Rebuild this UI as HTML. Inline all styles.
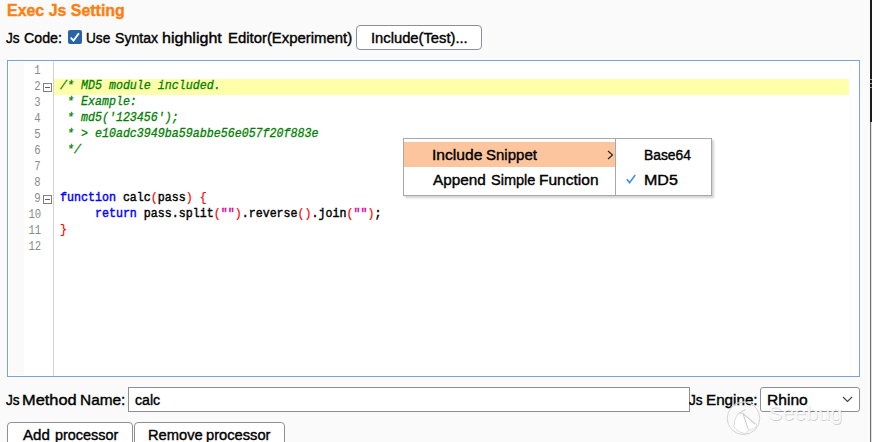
<!DOCTYPE html>
<html><head><meta charset="utf-8">
<style>
html,body{margin:0;padding:0;}
body{width:872px;height:442px;overflow:hidden;background:#fafafa;position:relative;font-family:"Liberation Sans",sans-serif;color:#000;}
.abs{position:absolute;}
.t{position:absolute;white-space:nowrap;line-height:normal;transform-origin:0 0;font-family:"Liberation Sans",sans-serif;-webkit-text-stroke-width:0.4px;}
.cb{left:68px;top:30px;width:14px;height:14px;background:#2b64a6;border-radius:2px;}
.btn{position:absolute;border:1px solid #8e8e96;border-radius:4px;background:#fff;box-sizing:border-box;}
.editor{left:7px;top:60px;width:853px;height:317px;box-sizing:border-box;border:1px solid #7ca3d9;background:#fff;}
.gut1{position:absolute;left:1px;top:1px;width:15px;height:313px;background:#fafafa;}
.gline{position:absolute;left:45px;top:0;width:1px;height:315px;background:#d4d4d4;}
.hl{position:absolute;left:46px;top:18px;width:795px;height:16px;background:#ffffaa;}
.code{position:absolute;left:0;top:0;font-family:"Liberation Mono",monospace;}
.ln{position:absolute;right:0px;top:0.6px;color:#8a8a8a;font-size:12.6px;line-height:16px;transform-origin:100% 0;transform:scaleX(0.84);}
.lnw{position:absolute;left:0;width:33px;height:16px;}
.cl{position:absolute;left:52px;font-weight:normal;-webkit-text-stroke-width:0.45px;line-height:16px;font-size:13.4px;transform-origin:0 0;transform:scaleX(0.8694);white-space:pre;}
.cm{color:#008000;font-style:italic;-webkit-text-stroke-width:0.3px;}
.kw{color:#0000ff;}
.pr{color:#ff0000;-webkit-text-stroke-width:0.2px;}
.st{color:#dc009c;}
.fold{position:absolute;left:35px;width:7px;height:7px;border:1px solid #808080;background:#fff;}
.fold:after{content:"";position:absolute;left:1px;top:3px;width:5px;height:1px;background:#606060;}
.input{position:absolute;border:1px solid #8e8e96;background:#fff;box-sizing:border-box;}
</style></head>
<body>
<div class="abs cb"><svg width="14" height="14" viewBox="0 0 14 14" style="display:block"><path d="M2.7 7.6 L5.5 10.6 L10.9 3.3" stroke="#fff" stroke-width="1.8" fill="none"/></svg></div>
<div class="btn" style="left:356px;top:25px;width:126px;height:25px;"></div>

<div class="abs editor">
  <div class="gut1"></div>
  <div class="gline"></div>
  <div class="hl"></div>
  <div class="code">
    <div class="lnw" style="top:1px"><div class="ln">1</div></div>
    <div class="lnw" style="top:17px"><div class="ln">2</div></div>
    <div class="lnw" style="top:33px"><div class="ln">3</div></div>
    <div class="lnw" style="top:49px"><div class="ln">4</div></div>
    <div class="lnw" style="top:65px"><div class="ln">5</div></div>
    <div class="lnw" style="top:81px"><div class="ln">6</div></div>
    <div class="lnw" style="top:97px"><div class="ln">7</div></div>
    <div class="lnw" style="top:113px"><div class="ln">8</div></div>
    <div class="lnw" style="top:129px"><div class="ln">9</div></div>
    <div class="lnw" style="top:145px"><div class="ln">10</div></div>
    <div class="lnw" style="top:161px"><div class="ln">11</div></div>
    <div class="lnw" style="top:177px"><div class="ln">12</div></div>
    <div class="fold" style="top:22px"></div>
    <div class="fold" style="top:134px"></div>
    <div class="cl cm" style="top:17px">/* MD5 module included.</div>
    <div class="cl cm" style="top:33px"> * Example:</div>
    <div class="cl cm" style="top:49px"> * md5('123456');</div>
    <div class="cl cm" style="top:65px"> * &gt; e10adc3949ba59abbe56e057f20f883e</div>
    <div class="cl cm" style="top:81px"> */</div>
    <div class="cl" style="top:129px"><span class="kw">function</span> calc<span class="pr">(</span>pass<span class="pr">)</span> <span class="pr">{</span></div>
    <div class="cl" style="top:145px">     <span class="kw">return</span> pass.split<span class="pr">(</span><span class="st">""</span><span class="pr">)</span>.reverse<span class="pr">()</span>.join<span class="pr">(</span><span class="st">""</span><span class="pr">)</span>;</div>
    <div class="cl" style="top:161px"><span class="pr">}</span></div>
  </div>
</div>

<div class="abs" style="left:403px;top:138px;width:309px;height:58px;box-sizing:border-box;background:#fff;border:1px solid #a8a8a8;box-shadow:2px 2px 2px rgba(0,0,0,0.18);"></div>
<div class="abs" style="left:404px;top:142px;width:211px;height:25px;background:#fdc59d;"></div>
<div class="abs" style="left:615px;top:139px;width:1px;height:56px;background:#a8a8a8;"></div>
<svg class="abs" style="left:605px;top:149px" width="10" height="12" viewBox="0 0 10 12"><path d="M3 2 L7.5 6 L3 10" stroke="#202020" stroke-width="1.1" fill="none"/></svg>
<svg class="abs" style="left:625px;top:173px" width="12" height="12" viewBox="0 0 12 12"><path d="M1.8 6.2 L4.6 9.6 L10.2 2" stroke="#3d8ee8" stroke-width="1.6" fill="none"/></svg>

<div class="input" style="left:128px;top:387px;width:562px;height:25px;"></div>
<div class="input" style="left:760px;top:387px;width:100px;height:25px;border-radius:3px;"></div>
<svg class="abs" style="left:841px;top:394px" width="14" height="10" viewBox="0 0 14 10"><path d="M2 3 L6.5 7.5 L11 3" stroke="#404040" stroke-width="1.1" fill="none"/></svg>
<div class="btn" style="left:7px;top:422px;width:126px;height:30px;"></div>
<div class="btn" style="left:134px;top:422px;width:151px;height:30px;"></div>

<div class="t" style="left:7.00px;top:1.52px;font-size:16px;font-weight:bold;color:#fb8012;transform:scaleX(0.9957)">Exec Js Setting</div>
<div class="t" style="left:6.07px;top:28.97px;font-size:15.5px;font-weight:normal;color:#000;transform:scaleX(0.8800)">Js</div>
<div class="t" style="left:24.10px;top:28.97px;font-size:15.5px;font-weight:normal;color:#000;transform:scaleX(0.9162)">Code:</div>
<div class="t" style="left:86.00px;top:28.97px;font-size:15.5px;font-weight:normal;color:#000;transform:scaleX(0.8800)">Use</div>
<div class="t" style="left:114.50px;top:28.97px;font-size:15.5px;font-weight:normal;color:#000;transform:scaleX(0.9090)">Syntax</div>
<div class="t" style="left:161.66px;top:28.97px;font-size:15.5px;font-weight:normal;color:#000;transform:scaleX(1.0360)">highlight</div>
<div class="t" style="left:228.44px;top:28.97px;font-size:15.5px;font-weight:normal;color:#000;transform:scaleX(0.9606)">Editor(Experiment)</div>
<div class="t" style="left:371.15px;top:28.97px;font-size:15.5px;font-weight:normal;color:#000;transform:scaleX(0.9512)">Include(Test)...</div>
<div class="t" style="left:431.59px;top:145.97px;font-size:15.5px;font-weight:normal;color:#000;transform:scaleX(1.0091)">Include</div>
<div class="t" style="left:486.20px;top:145.97px;font-size:15.5px;font-weight:normal;color:#000;transform:scaleX(0.9688)">Snippet</div>
<div class="t" style="left:432.80px;top:170.97px;font-size:15.5px;font-weight:normal;color:#000;transform:scaleX(0.9864)">Append</div>
<div class="t" style="left:490.60px;top:170.97px;font-size:15.5px;font-weight:normal;color:#000;transform:scaleX(0.9367)">Simple</div>
<div class="t" style="left:539.20px;top:170.97px;font-size:15.5px;font-weight:normal;color:#000;transform:scaleX(1.0012)">Function</div>
<div class="t" style="left:643.91px;top:145.97px;font-size:15.5px;font-weight:normal;color:#000;transform:scaleX(0.8932)">Base64</div>
<div class="t" style="left:643.76px;top:170.97px;font-size:15.5px;font-weight:normal;color:#000;transform:scaleX(1.0352)">MD5</div>
<div class="t" style="left:5.97px;top:390.97px;font-size:15.5px;font-weight:normal;color:#000;transform:scaleX(0.8800)">Js</div>
<div class="t" style="left:22.04px;top:390.97px;font-size:15.5px;font-weight:normal;color:#000;transform:scaleX(1.0563)">Method</div>
<div class="t" style="left:80.21px;top:390.97px;font-size:15.5px;font-weight:normal;color:#000;transform:scaleX(0.9943)">Name:</div>
<div class="t" style="left:135.20px;top:390.97px;font-size:15.5px;font-weight:normal;color:#000;transform:scaleX(0.9132)">calc</div>
<div class="t" style="left:689.07px;top:390.97px;font-size:15.5px;font-weight:normal;color:#000;transform:scaleX(0.8800)">Js</div>
<div class="t" style="left:705.92px;top:390.97px;font-size:15.5px;font-weight:normal;color:#000;transform:scaleX(0.9808)">Engine:</div>
<div class="t" style="left:766.69px;top:390.97px;font-size:15.5px;font-weight:normal;color:#000;transform:scaleX(1.0057)">Rhino</div>
<div class="t" style="left:22.70px;top:425.77px;font-size:15.5px;font-weight:normal;color:#000;transform:scaleX(0.9719)">Add</div>
<div class="t" style="left:54.87px;top:425.77px;font-size:15.5px;font-weight:normal;color:#000;transform:scaleX(0.9298)">processor</div>
<div class="t" style="left:148.25px;top:425.77px;font-size:15.5px;font-weight:normal;color:#000;transform:scaleX(0.9484)">Remove</div>
<div class="t" style="left:205.85px;top:425.77px;font-size:15.5px;font-weight:normal;color:#000;transform:scaleX(0.9478)">processor</div>

<svg class="abs" style="left:724px;top:396px" width="40" height="40" viewBox="0 0 40 40">
 <circle cx="19.5" cy="22.3" r="16.3" stroke="#ffffff" stroke-width="1.6" fill="none" opacity="0.5"/>
 <circle cx="19.5" cy="22.3" r="16.3" stroke="#cdcdcd" stroke-width="0.9" fill="none"/>
 <path d="M19 17.6 L33 29 Q31 33 27 34 L24.5 33.5 L23 37.5 Q14 37 10 31 Q10 24 13 19 Q16 17 19 17.6 Z" fill="#ffffff" stroke="#d4d4d4" stroke-width="0.8"/>
 <path d="M14.5 17.4 L21.7 13.6 M19 17.6 L24 33 M19 17.6 L31 28" stroke="#c4c4c4" stroke-width="0.9" fill="none"/>
</svg>
<div class="t" style="left:768px;top:402.4px;font-size:19.5px;color:rgba(255,255,255,0.9);-webkit-text-stroke-width:0;transform:scaleX(1.104);text-shadow:0.7px 0.7px 0.6px rgba(0,0,0,0.18),-0.4px -0.4px 0.4px rgba(0,0,0,0.10);">Seebug</div>


<div class="abs" style="left:870px;top:0;width:2px;height:122px;background:#1c1c1c;"></div>
<div class="abs" style="left:870px;top:122px;width:1px;height:320px;background:#6e6e6e;"></div>
<div class="abs" style="left:871px;top:122px;width:1px;height:320px;background:#e2e2e2;"></div>
<div class="abs" style="left:870px;top:79px;width:2px;height:1px;background:#9a9a9a;"></div>
<div class="abs" style="left:870px;top:83px;width:2px;height:1px;background:#9a9a9a;"></div>
<div class="abs" style="left:870px;top:87px;width:2px;height:1px;background:#9a9a9a;"></div>
</body></html>
